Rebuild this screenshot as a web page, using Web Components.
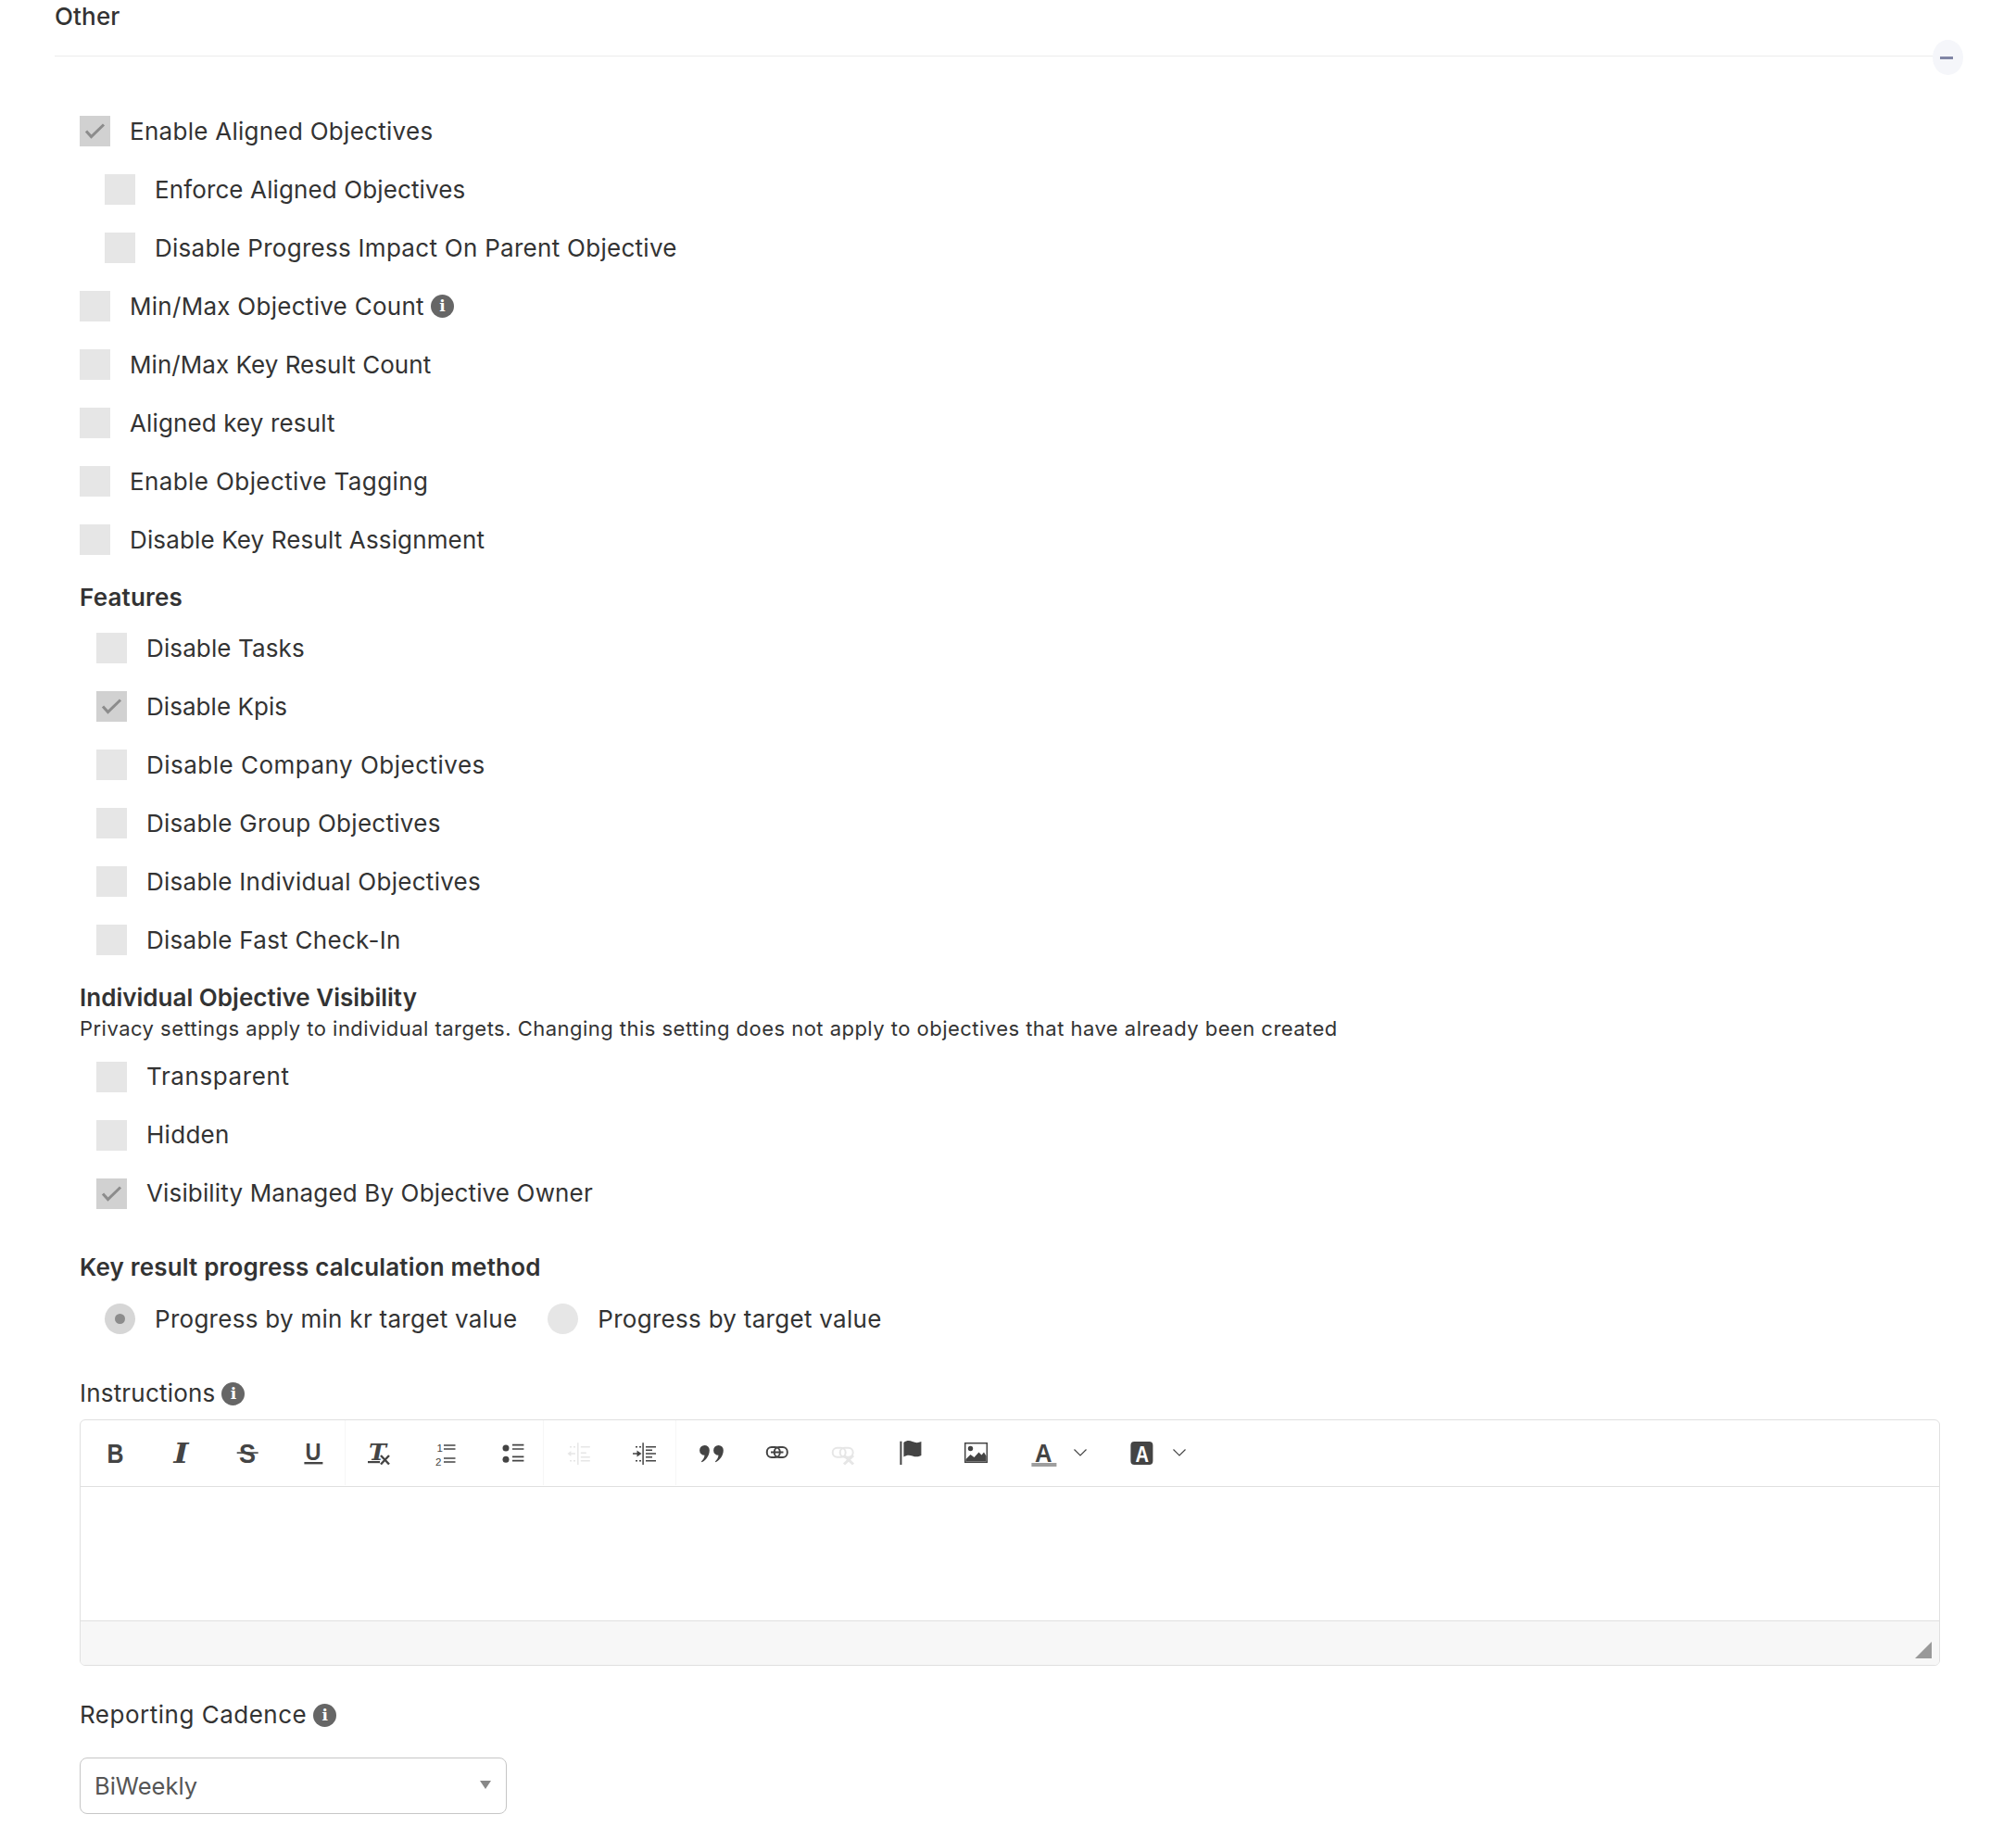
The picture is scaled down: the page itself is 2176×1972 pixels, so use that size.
<!DOCTYPE html>
<html lang="en">
<head>
<meta charset="utf-8">
<title>Other settings</title>
<style>
  html, body { margin: 0; padding: 0; background: #fff; }
  body { font-family: "Inter", "Open Sans", sans-serif; color: #333; }
</style>
</head>
<body>
<okr-settings></okr-settings>
<script>
// small helper so every element below sets up its shadow root the same way
function shadowHtml(el, html) {
  el.attachShadow({ mode: "open" });
  const template = document.createElement("template");
  template.innerHTML = html;
  el.shadowRoot.appendChild(template.content.cloneNode(true));
}

//Info badge next to labels
class InfoBadge extends HTMLElement {
  constructor() {
    super();
    shadowHtml(this, `
      <style>
        :host { display: inline-flex; width: 25px; height: 25px; border-radius: 50%; background: #666; color: #fff; letter-spacing: 0;
                align-items: center; justify-content: center; font: bold 17px/1 "DejaVu Serif", serif; flex: none; }
      </style>i`);
  }
}
customElements.define("info-badge", InfoBadge);

//Section title with the collapse button sitting on the rule
class SectionHead extends HTMLElement {
  constructor() {
    super();
    shadowHtml(this, `
      <style>
        :host { display: block; position: relative; height: 61px; margin-left: 59px; width: 2060px; }
        .title { height: 60px; width: 2027px; border-bottom: 1px solid #ececec; box-sizing: content-box; font-size: 26px;
                 letter-spacing: .15px; line-height: 36px; color: #333; font-weight: 500; }
        .toggle { position: absolute; right: 0; top: 43px; width: 33px; height: 38px; border-radius: 50%; background: #f5f6fa;
                  display: flex; align-items: center; justify-content: center; }
        .toggle i { display: block; width: 14px; height: 3px; background: #8085a5; margin-right: 3px; margin-top: 1px; }
      </style>
      <div class="title"><slot></slot></div>
      <div class="toggle"><i></i></div>`);
  }
}
customElements.define("section-head", SectionHead);

//Checkbox row, "checked" draws the tick
class CheckRow extends HTMLElement {
  constructor() {
    super();
    const tick = this.hasAttribute("checked")
      ? `<svg width="33" height="33" viewBox="0 0 33 33"><path d="M7 16.5l5.5 6L26 9.5" fill="none" stroke="#8c8c8c" stroke-width="3"/></svg>`
      : "";
    shadowHtml(this, `
      <style>
        :host { display: flex; align-items: center; height: 63px; gap: 21px; font-size: 26px; letter-spacing: .28px; color: #333; }
        .box { width: 33px; height: 33px; background: ${this.hasAttribute("checked") ? "#d1d1d1" : "#e6e6e6"}; flex: none; }
        svg { display: block; }
        .label { display: inline-flex; align-items: center; gap: 7px; margin-top: -1px; }
      </style>
      <div class="box">${tick}</div>
      <div class="label"><slot></slot></div>`);
  }
}
customElements.define("check-row", CheckRow);

//Radio button with label
class RadioOption extends HTMLElement {
  constructor() {
    super();
    const on = this.hasAttribute("checked");
    shadowHtml(this, `
      <style>
        :host { display: inline-flex; align-items: center; height: 63px; gap: 21px; font-size: 26px; letter-spacing: .28px; color: #333; }
        .dot { width: 33px; height: 33px; border-radius: 50%; background: ${on ? "#d6d6d6" : "#e6e6e6"};
               display: flex; align-items: center; justify-content: center; flex: none; }
        .dot i { width: 11px; height: 11px; border-radius: 50%; background: #8c8c8c; display: ${on ? "block" : "none"}; }
        .label { margin-top: -1px; }
      </style>
      <div class="dot"><i></i></div>
      <div class="label"><slot></slot></div>`);
  }
}
customElements.define("radio-option", RadioOption);

//Toolbar icons, drawn in a 36x36 box centered on the button
const serifBold = `font-family="DejaVu Serif" font-weight="bold"`;
const sansBold = `font-family="Liberation Sans" font-weight="bold"`;
const comma = `a5.3 5.3 0 0 1 5.3 5.5c0 5-3.500 10.500-8.300 12.800l-.6-.7c2-1.800 3.300-4 3.600-6.800a5.300 5.300 0 0 1 0-10.800z`;
const ICONS = {
  bold: `<text x="9.5" y="29" font-size="30" ${sansBold} textLength="18" lengthAdjust="spacingAndGlyphs">B</text>`,
  italic: `<text x="10.5" y="29" font-size="29" font-style="italic" ${serifBold} textLength="16" lengthAdjust="spacingAndGlyphs">I</text>`,
  strike: `<text x="10" y="29" font-size="30" ${sansBold} textLength="18" lengthAdjust="spacingAndGlyphs">S</text><rect x="7.7" y="17.300" width="23" height="1.600"/>`,
  underline: `<text x="9.500" y="25.500" font-size="25" ${sansBold} textLength="17" lengthAdjust="spacingAndGlyphs">U</text><rect x="8.400" y="28" width="20" height="2.400"/>`,
  clear: `<text x="7" y="26" font-size="25" font-style="italic" ${serifBold} textLength="19" lengthAdjust="spacingAndGlyphs">T</text><rect x="6" y="27" width="13" height="2.200"/><path d="M20 21l9 9.500M29 21l-9 9.500" fill="none" stroke="currentColor" stroke-width="2.400"/>`,
  ol: `<text x="9.500" y="17" font-size="11.500" font-family="Liberation Sans">1</text><text x="8" y="32" font-size="11.500" font-family="Liberation Sans">2</text><path d="M17 10h12.500M17 14h12.500M17 24h12.500M17 28h12.500" fill="none" stroke="currentColor" stroke-width="1.500"/>`,
  ul: `<circle cx="12" cy="13" r="3.500"/><circle cx="12" cy="25.300" r="3.500"/><path d="M19 9.700h12.400M19 14h12.400M19 22.300h12.400M19 26.700h12.400" fill="none" stroke="currentColor" stroke-width="1.700"/>`,
  outdent: `<path d="M18.800 7.300V31M21.800 11.700h10M21.800 18.300h6M21.800 22.700h10M21.800 26.700h10M16 19h-6M10 11.700h2M14 11.700h2M10 26.700h2M14 26.700h2" fill="none" stroke="currentColor" stroke-width="1.500"/><path d="M7.400 19l4-3v6z"/>`,
  indent: `<path d="M18.100 7.300V31M21 11.700h11M21 15.300h7M21 18.900h11M21 22.700h7M21 26.700h11M7 19h6M10 11.700h2M14 11.700h2M10 26.700h2M14 26.700h2" fill="none" stroke="currentColor" stroke-width="1.500"/><path d="M16.500 19l-5-3.500v7z"/>`,
  quote: `<path d="M12.500 10${comma}M27.500 10${comma}"/>`,
  link: `<rect x="8.800" y="12" width="14" height="11" rx="5" fill="none" stroke="currentColor" stroke-width="2"/><rect x="16.800" y="12" width="14" height="11" rx="5" fill="none" stroke="currentColor" stroke-width="2"/><rect x="13" y="16.500" width="13.500" height="2"/>`,
  unlink: `<rect x="8.700" y="12.700" width="14" height="10" rx="5" fill="none" stroke="currentColor" stroke-width="2"/><rect x="16.700" y="12.700" width="14" height="10" rx="5" fill="none" stroke="currentColor" stroke-width="2"/><path d="M21 21l10 9.500M31 21l-10 9.500" fill="none" stroke="currentColor" stroke-width="3"/>`,
  flag: `<rect x="9.400" y="5.700" width="2" height="25.300"/><path d="M13.400 7c3.500-2.500 6-2.500 9.500-1s6 1.500 9.500 0v15c-3.500 1.700-6 1.700-9.500.5s-6-1.200-9.500 1z"/>`,
  image: `<rect x="8.700" y="7.700" width="23.600" height="20.600" fill="none" stroke="currentColor" stroke-width="1.500"/><circle cx="14.500" cy="13.500" r="2.700"/><path d="M9.500 27.500v-2.500l5-5 4 3 5-5.500 3 3 2.500-3 2.500 4v6z"/>`,
  color: `<text x="8" y="28" font-size="28" ${sansBold} textLength="18.500" lengthAdjust="spacingAndGlyphs">A</text><rect x="4.400" y="29" width="27" height="4" fill="#9e9e9e"/>`,
  bgcolor: `<rect x="4.400" y="6" width="24" height="25" rx="4"/><text x="9.400" y="28" font-size="23" fill="#fff" ${sansBold} textLength="14.500" lengthAdjust="spacingAndGlyphs">A</text>`
};

class EditorButton extends HTMLElement {
  constructor() {
    super();
    const name = this.getAttribute("icon");
    const off = this.hasAttribute("disabled");
    const wide = this.hasAttribute("menu");
    const chevron = wide ? `<svg class="chev" width="14" height="8" viewBox="0 0 14 8"><path d="M.5.5L7 7l6.500-6.500" fill="none" stroke="#444" stroke-width="1.200"/></svg>` : "";
    shadowHtml(this, `
      <style>
        :host { display: flex; align-items: center; box-sizing: border-box; height: 70px; flex: none; color: ${off ? "#e6e6e6" : "#444"};
                width: ${wide ? "107px" : "71.33px"}; padding-left: ${wide ? "22px" : "17.66px"}; }
        :host([sep]) { border-right: 1px solid #f6f6f6; }
        svg { display: block; flex: none; fill: currentColor; overflow: visible; }
        .chev { margin-left: 14.5px; }
      </style>
      <svg width="36" height="36" viewBox="0 0 36 36">${ICONS[name]}</svg>${chevron}`);
  }
}
customElements.define("editor-button", EditorButton);

//The rich text box: toolbar, empty body and status bar with the resize grip
class RichEditor extends HTMLElement {
  constructor() {
    super();
    shadowHtml(this, `
      <style>
        :host { display: block; box-sizing: border-box; height: 266px; width: 2008px; margin-left: 86px; border: 1px solid #e0e0e0; border-radius: 6px; overflow: hidden; background: #fff; }
        .bar { display: flex; box-sizing: border-box; height: 72px; padding-left: 1px; border-bottom: 1px solid #e0e0e0; }
        .body { height: 144px; }
        .status { box-sizing: border-box; height: 48px; background: #f7f7f7; border-top: 1px solid #e0e0e0; position: relative; }
        .grip { position: absolute; right: 8px; bottom: 7px; width: 18px; height: 18px; background: #999; clip-path: polygon(100% 0, 100% 100%, 0 100%); }
      </style>
      <div class="bar">
        <editor-button icon="bold"></editor-button>
        <editor-button icon="italic"></editor-button>
        <editor-button icon="strike"></editor-button>
        <editor-button icon="underline" sep></editor-button>
        <editor-button icon="clear"></editor-button>
        <editor-button icon="ol"></editor-button>
        <editor-button icon="ul" sep></editor-button>
        <editor-button icon="outdent" disabled></editor-button>
        <editor-button icon="indent" sep></editor-button>
        <editor-button icon="quote"></editor-button>
        <editor-button icon="link"></editor-button>
        <editor-button icon="unlink" disabled></editor-button>
        <editor-button icon="flag"></editor-button>
        <editor-button icon="image"></editor-button>
        <editor-button icon="color" menu></editor-button>
        <editor-button icon="bgcolor" menu></editor-button>
      </div>
      <div class="body"></div>
      <div class="status"><div class="grip"></div></div>`);
  }
}
customElements.define("rich-editor", RichEditor);

//Closed dropdown look
class SelectBox extends HTMLElement {
  constructor() {
    super();
    shadowHtml(this, `
      <style>
        :host { display: flex; align-items: center; justify-content: space-between; box-sizing: border-box; width: 461px; height: 61px; margin-left: 86px;
                border: 1px solid #c6c6c6; border-radius: 8px; padding: 0 16px 0 15px; font-size: 25.5px; color: #555; }
        .arrow { width: 0; height: 0; border-left: 6px solid transparent; border-right: 6px solid transparent; border-top: 9px solid #888; margin-top: -2px; }
      </style>
      <div><slot></slot></div>
      <div class="arrow"></div>`);
  }
}
customElements.define("select-box", SelectBox);

//The whole page
class OkrSettings extends HTMLElement {
  constructor() {
    super();
    shadowHtml(this, `
      <style>
        :host { display: block; height: 1972px; overflow: hidden; font-family: "Inter", "Open Sans", sans-serif; color: #333; }
        section-head { margin-bottom: 49px; }
        .top { margin-left: 86px; }
        .sub { margin-left: 113px; }
        .group { margin-left: 104px; }
        .heading { margin-left: 86px; font-size: 26px; letter-spacing: .18px; line-height: 34px; font-weight: 600; color: #333; }
        .features { padding-top: 14px; padding-bottom: 6px; }
        .vis { padding-top: 14px; letter-spacing: .02px; }
        .note { margin-left: 86px; font-size: 22px; letter-spacing: .47px; line-height: 32px; color: #333; margin-bottom: 4.5px; }
        .calc { margin-top: 31.5px; margin-bottom: 7px; }
        .radios { display: flex; margin-left: 113px; gap: 33px; margin-bottom: 32px; }
        .field { display: flex; align-items: center; gap: 7px; margin-left: 86px; font-size: 26px; line-height: 34px; color: #333; }
        .instr { margin-bottom: 11px; letter-spacing: .2px; }
        .report { margin-top: 36px; margin-bottom: 29px; letter-spacing: .5px; }
      </style>
      <section-head>Other</section-head>
      <check-row class="top" checked>Enable Aligned Objectives</check-row>
      <div class="sub">
        <check-row style="letter-spacing:.12px">Enforce Aligned Objectives</check-row>
        <check-row>Disable Progress Impact On Parent Objective</check-row>
      </div>
      <check-row class="top">Min/Max Objective Count <info-badge></info-badge></check-row>
      <check-row class="top" style="letter-spacing:.05px">Min/Max Key Result Count</check-row>
      <check-row class="top" style="letter-spacing:.13px">Aligned key result</check-row>
      <check-row class="top" style="letter-spacing:.4px">Enable Objective Tagging</check-row>
      <check-row class="top" style="letter-spacing:.14px">Disable Key Result Assignment</check-row>
      <div class="heading features">Features</div>
      <check-row class="group" style="letter-spacing:.12px">Disable Tasks</check-row>
      <check-row class="group" style="letter-spacing:.05px" checked>Disable Kpis</check-row>
      <check-row class="group" style="letter-spacing:.49px">Disable Company Objectives</check-row>
      <check-row class="group">Disable Group Objectives</check-row>
      <check-row class="group">Disable Individual Objectives</check-row>
      <check-row class="group">Disable Fast Check-In</check-row>
      <div class="heading vis">Individual Objective Visibility</div>
      <div class="note">Privacy settings apply to individual targets. Changing this setting does not apply to objectives that have already been created</div>
      <check-row class="group" style="letter-spacing:.6px">Transparent</check-row>
      <check-row class="group">Hidden</check-row>
      <check-row class="group" style="letter-spacing:.15px" checked>Visibility Managed By Objective Owner</check-row>
      <div class="heading calc">Key result progress calculation method</div>
      <div class="radios">
        <radio-option checked>Progress by min kr target value</radio-option>
        <radio-option>Progress by target value</radio-option>
      </div>
      <div class="field instr">Instructions <info-badge></info-badge></div>
      <rich-editor></rich-editor>
      <div class="field report">Reporting Cadence <info-badge></info-badge></div>
      <select-box>BiWeekly</select-box>`);
  }
}
customElements.define("okr-settings", OkrSettings);
</script>
</body>
</html>
